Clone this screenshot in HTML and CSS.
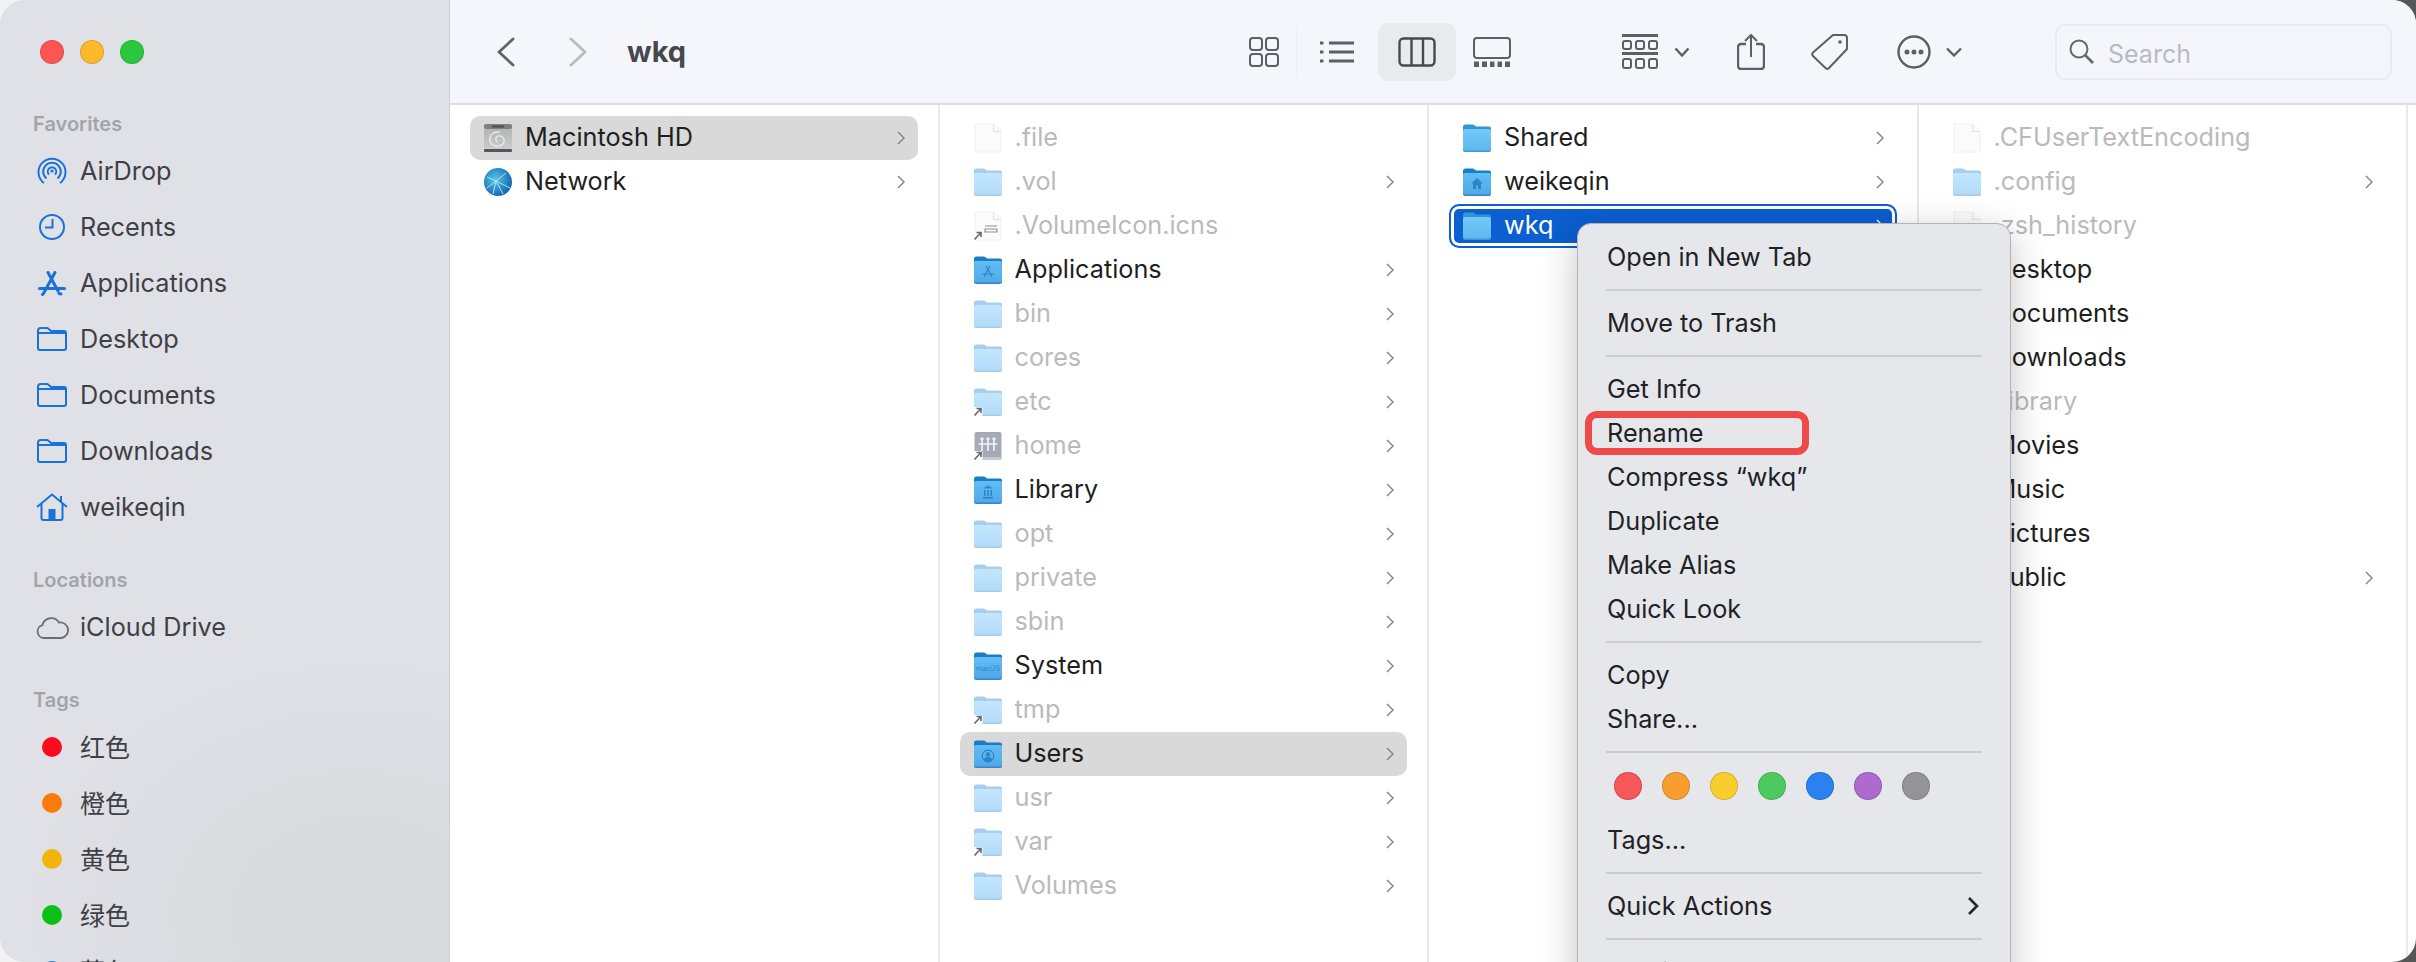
FILE: index.html
```html
<!DOCTYPE html>
<html>

<head>
    <meta charset="utf-8">
    <title>wkq</title>
    <link rel="stylesheet" href="styles.css">
</head>

<body>
    <svg class="defs" xmlns="http://www.w3.org/2000/svg">
        <defs>
            <linearGradient id="g-bright" x1="0" y1="0" x2="0" y2="1">
                <stop offset="0" stop-color="#62bdf4" />
                <stop offset="1" stop-color="#4fa9e8" />
            </linearGradient>
            <linearGradient id="g-dim" x1="0" y1="0" x2="0" y2="1">
                <stop offset="0" stop-color="#c3e6fd" />
                <stop offset="1" stop-color="#b2dbf9" />
            </linearGradient>
            <linearGradient id="g-plain" x1="0" y1="0" x2="0" y2="1">
                <stop offset="0" stop-color="#74c9f8" />
                <stop offset="1" stop-color="#5db8f1" />
            </linearGradient>
            <linearGradient id="g-drive" x1="0" y1="0" x2="0" y2="1">
                <stop offset="0" stop-color="#aeb0b0" />
                <stop offset="1" stop-color="#cfd1d1" />
            </linearGradient>
            <radialGradient id="g-globe" cx="0.4" cy="0.4" r="0.7">
                <stop offset="0" stop-color="#58c4e8" />
                <stop offset="1" stop-color="#0c5da6" />
            </radialGradient>
        </defs>
        <symbol id="folder-bright" viewBox="0 0 30 30">
            <path fill="#1b7ec2" d="M1 4a2.500 2.500 0 0 1 2.500-2.500h7a3 3 0 0 1 2 .8L14 3.500h13a2 2 0 0 1 2 2V12H1z" />
            <rect x="1" y="6" width="28" height="23" rx="2" fill="#3a86c4" />
            <rect x="1" y="6" width="28" height="21.500" rx="2" fill="url(#g-bright)" />
        </symbol>
        <symbol id="folder-plain" viewBox="0 0 30 30">
            <path fill="#2f96d9" d="M1 4a2.500 2.500 0 0 1 2.500-2.500h7a3 3 0 0 1 2 .8L14 3.500h13a2 2 0 0 1 2 2V12H1z" />
            <rect x="1" y="6" width="28" height="23" rx="2" fill="#4794cf" />
            <rect x="1" y="6" width="28" height="21.500" rx="2" fill="url(#g-plain)" />
        </symbol>
        <symbol id="folder-dim" viewBox="0 0 30 30">
            <path fill="#a6cfee" d="M1 4a2.500 2.500 0 0 1 2.500-2.500h7a3 3 0 0 1 2 .8L14 3.500h13a2 2 0 0 1 2 2V12H1z" />
            <rect x="1" y="6" width="28" height="23" rx="2" fill="#a3cbe8" />
            <rect x="1" y="6" width="28" height="21.500" rx="2" fill="url(#g-dim)" />
        </symbol>
        <symbol id="file" viewBox="0 0 30 30">
            <path fill="#fbfbfb" stroke="#f0f0f0" d="M2 1h19l7 7v21H2z" />
            <path fill="none" stroke="#e2e2e2" d="M20.500 1.500v7h7" />
        </symbol>
        <symbol id="alias" viewBox="0 0 30 30">
            <rect x="0" y="20" width="9.500" height="9.500" rx="1.500" fill="#fff" />
            <path fill="none" stroke="#666" stroke-width="1.600" d="M1.500 28.500l6-6.500M3.500 21.500h4.500v4.500" />
        </symbol>
        <symbol id="chev" viewBox="0 0 8 14">
            <path fill="none" stroke="#808082" stroke-width="1.400" d="M1 1l6 6-6 6" />
        </symbol>
        <symbol id="folder-line" viewBox="0 0 30 24">
            <path fill="none" stroke="#1a72d8" stroke-width="2" d="M1 6V3.500A2.500 2.500 0 0 1 3.500 1h6a3 3 0 0 1 2 .8L14 4h13a2 2 0 0 1 2 2v15a2 2 0 0 1-2 2H3a2 2 0 0 1-2-2V6h28" />
        </symbol>
    </svg>

    <div class="window">
        <aside class="sidebar">
            <div class="lights">
                <span class="light red"></span>
                <span class="light yellow"></span>
                <span class="light green"></span>
            </div>
            <div class="side-label first">Favorites</div>
            <div class="side-row">
                <span class="side-icon">
                    <svg width="30" height="28" viewBox="0 0 30 28" fill="none" stroke="#1a72d8" stroke-width="2">
                        <path d="M7 26A13.500 13.500 0 1 1 23 26" />
                        <path d="M9.500 21.500A8.800 8.800 0 1 1 20.500 21.500" />
                        <path d="M12 17.500a4.200 4.200 0 1 1 6 0" />
                        <circle cx="15" cy="14" r="1.600" fill="#1a72d8" stroke="none" />
                    </svg>
                </span>
                AirDrop
            </div>
            <div class="side-row">
                <span class="side-icon">
                    <svg width="28" height="28" viewBox="0 0 28 28" fill="none" stroke="#1a72d8" stroke-width="2">
                        <circle cx="14" cy="14" r="12" />
                        <path d="M14.500 6v8.500H7" />
                    </svg>
                </span>
                Recents
            </div>
            <div class="side-row">
                <span class="side-icon">
                    <svg width="28" height="25" viewBox="0 0 28 25" fill="none" stroke="#1a72d8" stroke-width="3" stroke-linecap="round">
                        <path d="M10 1.500L20 20M17 1.500L6 21.500" />
                        <path d="M1.500 17.500H26.500" />
                        <path d="M21 22.500l2 .5M4.500 23.500l1-1" />
                    </svg>
                </span>
                Applications
            </div>
            <div class="side-row">
                <span class="side-icon"><svg width="30" height="24"><use href="#folder-line" /></svg></span>
                Desktop
            </div>
            <div class="side-row">
                <span class="side-icon"><svg width="30" height="24"><use href="#folder-line" /></svg></span>
                Documents
            </div>
            <div class="side-row">
                <span class="side-icon"><svg width="30" height="24"><use href="#folder-line" /></svg></span>
                Downloads
            </div>
            <div class="side-row">
                <span class="side-icon">
                    <svg width="32" height="28" viewBox="0 0 32 28" fill="none" stroke="#1a72d8" stroke-width="2">
                        <path d="M1 14L16 1.500 31 14M25 9V3M5.500 11v14a2 2 0 0 0 2 2h17a2 2 0 0 0 2-2V11" />
                        <rect x="12.500" y="16" width="7" height="11" fill="#1a72d8" stroke="none" />
                    </svg>
                </span>
                weikeqin
            </div>
            <div class="side-label">Locations</div>
            <div class="side-row">
                <span class="side-icon">
                    <svg width="33" height="23" viewBox="0 0 33 23" fill="none" stroke="#6d6e72" stroke-width="1.800">
                        <path d="M8 22a6.500 6.500 0 0 1-1.500-12.800A9 9 0 0 1 23 6.500a7.800 7.800 0 0 1 2.500 15.500z" />
                    </svg>
                </span>
                iCloud Drive
            </div>
            <div class="side-label">Tags</div>
            <div class="side-row"><span class="side-icon"><span class="tag-dot t-red"></span></span><span class="tag-name">红色</span></div>
            <div class="side-row"><span class="side-icon"><span class="tag-dot t-orange"></span></span><span class="tag-name">橙色</span></div>
            <div class="side-row"><span class="side-icon"><span class="tag-dot t-yellow"></span></span><span class="tag-name">黄色</span></div>
            <div class="side-row"><span class="side-icon"><span class="tag-dot t-green"></span></span><span class="tag-name">绿色</span></div>
            <div class="side-row"><span class="side-icon"><span class="tag-dot t-blue"></span></span><span class="tag-name">蓝色</span></div>
        </aside>

        <main class="main">
            <header class="toolbar">
                <svg class="nav-back" width="18" height="30" viewBox="0 0 18 30" fill="none" stroke="#636367" stroke-width="2.800" stroke-linecap="round"><path d="M16 2L2 15l14 13" /></svg>
                <svg class="nav-forward" width="18" height="30" viewBox="0 0 18 30" fill="none" stroke="#b9babd" stroke-width="2.800" stroke-linecap="round"><path d="M2 2l14 13L2 28" /></svg>
                <div class="title">wkq</div>

                <svg width="32" height="30" viewBox="0 0 32 30" fill="none" stroke="#5f5f63" stroke-width="2">
                    <rect x="2" y="1" width="12" height="12" rx="3" />
                    <rect x="18" y="1" width="12" height="12" rx="3" />
                    <rect x="2" y="17" width="12" height="12" rx="3" />
                    <rect x="18" y="17" width="12" height="12" rx="3" />
                </svg>
                <span class="tb-sep"></span>
                <svg class="tb-list" width="34" height="24" viewBox="0 0 34 24" fill="none" stroke="#5f5f63" stroke-width="3">
                    <path d="M0 3h3.500M0 12h3.500M0 21h3.500M9 3h25M9 12h25M9 21h25" />
                </svg>
                <span class="tb-active">
                    <svg width="38" height="30" viewBox="0 0 38 30" fill="none" stroke="#49494d" stroke-width="2.400">
                        <rect x="1.500" y="1.500" width="35" height="27" rx="4" />
                        <path d="M13.500 1.500v27M25 1.500v27" />
                    </svg>
                </span>
                <svg class="tb-gallery" width="38" height="30" viewBox="0 0 38 30" fill="#5f5f63">
                    <rect x="1" y="1" width="36" height="20" rx="3" fill="none" stroke="#5f5f63" stroke-width="2" />
                    <path d="M1 24.500h5V30H1zM9 24.500h5V30H9zM17 24.500h4.500V30H17zM24.500 24.500h4.500V30h-4.500zM32 24.500h5V30h-5z" />
                </svg>

                <svg class="tb-group" width="36" height="35" viewBox="0 0 36 35" fill="none" stroke="#5f5f63" stroke-width="2">
                    <path stroke-width="3" d="M0 1.500h36M0 19.500h36" />
                    <rect x="1" y="7" width="8" height="8" rx="2" />
                    <rect x="14" y="7" width="8" height="8" rx="2" />
                    <rect x="27" y="7" width="8" height="8" rx="2" />
                    <rect x="1" y="25" width="8" height="9" rx="2" />
                    <rect x="14" y="25" width="8" height="9" rx="2" />
                    <rect x="27" y="25" width="8" height="9" rx="2" />
                </svg>
                <svg class="tb-drop" width="16" height="10" viewBox="0 0 16 10" fill="none" stroke="#5f5f63" stroke-width="2.400"><path d="M1.500 1.500L8 8.500l6.500-7" /></svg>
                <svg class="tb-share" width="28" height="37" viewBox="0 0 28 37" fill="none" stroke="#5f5f63" stroke-width="2">
                    <path stroke-width="2.400" d="M9 11H4a3 3 0 0 0-3 3v19a3 3 0 0 0 3 3h20a3 3 0 0 0 3-3V14a3 3 0 0 0-3-3h-5" />
                    <path d="M14 24V2M8 8l6-6 6 6" />
                </svg>
                <svg class="tb-tag" width="38" height="38" viewBox="0 0 38 38" fill="none" stroke="#5f5f63" stroke-width="2">
                    <path d="M22 2h11a3 3 0 0 1 3 3v11L18 35a2.500 2.500 0 0 1-3.500 0L2 23a2.500 2.500 0 0 1 0-3.500z" />
                    <circle cx="29" cy="9" r="1.800" fill="#5f5f63" stroke="none" />
                </svg>
                <svg class="tb-more" width="34" height="34" viewBox="0 0 34 34" fill="none" stroke="#5f5f63" stroke-width="2.400">
                    <circle cx="17" cy="17" r="15.500" />
                    <circle cx="10" cy="17" r="1.300" fill="#5f5f63" />
                    <circle cx="17" cy="17" r="1.300" fill="#5f5f63" />
                    <circle cx="24" cy="17" r="1.300" fill="#5f5f63" />
                </svg>
                <svg class="tb-drop-more" width="18" height="10" viewBox="0 0 18 10" fill="none" stroke="#5f5f63" stroke-width="2.400"><path d="M2 1.500l7 7 7-7" /></svg>

                <div class="search">
                    <svg width="25" height="25" viewBox="0 0 25 25" fill="none" stroke="#68686c" stroke-width="2">
                        <circle cx="10" cy="10" r="8.500" />
                        <path stroke-width="2.600" d="M16 16l8 8" />
                    </svg>
                    <span class="search-text">Search</span>
                </div>
            </header>

            <div class="columns">
                <div class="col">
                    <div class="row selected">
                        <svg class="icon" viewBox="0 0 30 30">
                            <rect x="1" y="1" width="28" height="28" rx="3" fill="url(#g-drive)" />
                            <rect x="1" y="1" width="28" height="5" rx="2" fill="#7d7f80" />
                            <rect x="9" y="2.500" width="12" height="2" fill="#4c4d4e" />
                            <path fill="none" stroke="#eef0f0" stroke-width="1.200" d="M17 9c-6-1-11 3-10 9 1 5 9 7 13 3 3-4 0-9-5-8-3 1-3 5 0 6" />
                            <rect x="1" y="26" width="28" height="3" rx="1" fill="#55575a" />
                        </svg>
                        <span class="name">Macintosh HD</span>
                        <svg class="chev"><use href="#chev" /></svg>
                    </div>
                    <div class="row">
                        <svg class="icon" viewBox="0 0 30 30">
                            <circle cx="15" cy="15" r="14" fill="url(#g-globe)" />
                            <path fill="none" stroke="#b8ecf7" stroke-width="0.900" d="M4 10l9 4 10-8M13 14l-3 13M13 14l14 7M13 14l7 13M4 21l9-7" />
                        </svg>
                        <span class="name">Network</span>
                        <svg class="chev"><use href="#chev" /></svg>
                    </div>
                </div>

                <div class="col">
                    <div class="row"><svg class="icon"><use href="#file" /></svg><span class="name dim">.file</span></div>
                    <div class="row"><svg class="icon"><use href="#folder-dim" /></svg><span class="name dim">.vol</span><svg class="chev"><use href="#chev" /></svg></div>
                    <div class="row">
                        <svg class="icon" viewBox="0 0 30 30">
                            <use href="#file" width="30" height="30" />
                            <path fill="none" stroke="#8d8f99" stroke-width="1.200" d="M12 15h12M12 18h12v3H12z" />
                            <use href="#alias" width="30" height="30" />
                        </svg>
                        <span class="name dim">.VolumeIcon.icns</span>
                    </div>
                    <div class="row">
                        <svg class="icon" viewBox="0 0 30 30">
                            <use href="#folder-bright" width="30" height="30" />
                            <path fill="none" stroke="#2f83c9" stroke-width="1.200" d="M13 11l6 11M17 11l-6 11M9 19h12" />
                        </svg>
                        <span class="name">Applications</span>
                        <svg class="chev"><use href="#chev" /></svg>
                    </div>
                    <div class="row"><svg class="icon"><use href="#folder-dim" /></svg><span class="name dim">bin</span><svg class="chev"><use href="#chev" /></svg></div>
                    <div class="row"><svg class="icon"><use href="#folder-dim" /></svg><span class="name dim">cores</span><svg class="chev"><use href="#chev" /></svg></div>
                    <div class="row">
                        <svg class="icon" viewBox="0 0 30 30">
                            <use href="#folder-dim" width="30" height="30" />
                            <use href="#alias" width="30" height="30" />
                        </svg>
                        <span class="name dim">etc</span>
                        <svg class="chev"><use href="#chev" /></svg>
                    </div>
                    <div class="row">
                        <svg class="icon" viewBox="0 0 30 30">
                            <rect x="1.500" y="1" width="27" height="28" rx="2" fill="#a6a9b6" />
                            <rect x="1.500" y="26" width="27" height="3" rx="1" fill="#c7c8cf" />
                            <path fill="none" stroke="#f2f3f7" stroke-width="1.600" d="M9 9v11M5.500 13h7M15 9v11M11.500 13h7M21 9v11M17.500 13h7" />
                            <circle cx="9" cy="8" r="1.700" fill="#f2f3f7" />
                            <circle cx="15" cy="8" r="1.700" fill="#f2f3f7" />
                            <circle cx="21" cy="8" r="1.700" fill="#f2f3f7" />
                            <use href="#alias" width="30" height="30" />
                        </svg>
                        <span class="name dim">home</span>
                        <svg class="chev"><use href="#chev" /></svg>
                    </div>
                    <div class="row">
                        <svg class="icon" viewBox="0 0 30 30">
                            <use href="#folder-bright" width="30" height="30" />
                            <path fill="#2f83c9" d="M10 13.500l5-3 5 3zM10 22h10v1.500H10zM11 15h1.500v6H11zM14.200 15h1.500v6h-1.500zM17.500 15H19v6h-1.500z" />
                        </svg>
                        <span class="name">Library</span>
                        <svg class="chev"><use href="#chev" /></svg>
                    </div>
                    <div class="row"><svg class="icon"><use href="#folder-dim" /></svg><span class="name dim">opt</span><svg class="chev"><use href="#chev" /></svg></div>
                    <div class="row"><svg class="icon"><use href="#folder-dim" /></svg><span class="name dim">private</span><svg class="chev"><use href="#chev" /></svg></div>
                    <div class="row"><svg class="icon"><use href="#folder-dim" /></svg><span class="name dim">sbin</span><svg class="chev"><use href="#chev" /></svg></div>
                    <div class="row">
                        <svg class="icon" viewBox="0 0 30 30">
                            <use href="#folder-bright" width="30" height="30" />
                            <text class="macos-text" x="15" y="19.500" text-anchor="middle">macOS</text>
                        </svg>
                        <span class="name">System</span>
                        <svg class="chev"><use href="#chev" /></svg>
                    </div>
                    <div class="row">
                        <svg class="icon" viewBox="0 0 30 30">
                            <use href="#folder-dim" width="30" height="30" />
                            <use href="#alias" width="30" height="30" />
                        </svg>
                        <span class="name dim">tmp</span>
                        <svg class="chev"><use href="#chev" /></svg>
                    </div>
                    <div class="row selected">
                        <svg class="icon" viewBox="0 0 30 30">
                            <use href="#folder-bright" width="30" height="30" />
                            <circle cx="15" cy="17" r="5.800" fill="none" stroke="#2f83c9" stroke-width="1.200" />
                            <circle cx="15" cy="15.500" r="2.200" fill="#2f83c9" />
                            <path fill="#2f83c9" d="M11 21a4 3 0 0 1 8 0l-2 1.500h-4z" />
                        </svg>
                        <span class="name">Users</span>
                        <svg class="chev"><use href="#chev" /></svg>
                    </div>
                    <div class="row"><svg class="icon"><use href="#folder-dim" /></svg><span class="name dim">usr</span><svg class="chev"><use href="#chev" /></svg></div>
                    <div class="row">
                        <svg class="icon" viewBox="0 0 30 30">
                            <use href="#folder-dim" width="30" height="30" />
                            <use href="#alias" width="30" height="30" />
                        </svg>
                        <span class="name dim">var</span>
                        <svg class="chev"><use href="#chev" /></svg>
                    </div>
                    <div class="row"><svg class="icon"><use href="#folder-dim" /></svg><span class="name dim">Volumes</span><svg class="chev"><use href="#chev" /></svg></div>
                </div>

                <div class="col">
                    <div class="row"><svg class="icon"><use href="#folder-plain" /></svg><span class="name">Shared</span><svg class="chev"><use href="#chev" /></svg></div>
                    <div class="row">
                        <svg class="icon" viewBox="0 0 30 30">
                            <use href="#folder-bright" width="30" height="30" />
                            <path fill="#2f83c9" d="M15 11l-6 5.500h2v5.500h3v-3.500h2v3.500h3v-5.500h2z" />
                        </svg>
                        <span class="name">weikeqin</span>
                        <svg class="chev"><use href="#chev" /></svg>
                    </div>
                    <div class="row focused">
                        <svg class="icon"><use href="#folder-plain" /></svg>
                        <span class="name">wkq</span>
                        <svg class="chev" viewBox="0 0 8 14" fill="none" stroke="#fff" stroke-width="1.400"><path d="M1 1l6 6-6 6" /></svg>
                    </div>
                </div>

                <div class="col">
                    <div class="row"><svg class="icon"><use href="#file" /></svg><span class="name dim">.CFUserTextEncoding</span></div>
                    <div class="row"><svg class="icon"><use href="#folder-dim" /></svg><span class="name dim">.config</span><svg class="chev"><use href="#chev" /></svg></div>
                    <div class="row"><svg class="icon"><use href="#file" /></svg><span class="name dim">.zsh_history</span></div>
                    <div class="row"><span class="icon"></span><span class="name">Desktop</span></div>
                    <div class="row"><span class="icon"></span><span class="name">Documents</span></div>
                    <div class="row"><span class="icon"></span><span class="name">Downloads</span></div>
                    <div class="row"><span class="icon"></span><span class="name dim">Library</span></div>
                    <div class="row"><span class="icon"></span><span class="name">Movies</span></div>
                    <div class="row"><span class="icon"></span><span class="name">Music</span></div>
                    <div class="row"><span class="icon"></span><span class="name">Pictures</span></div>
                    <div class="row"><span class="icon"></span><span class="name">Public</span><svg class="chev"><use href="#chev" /></svg></div>
                </div>
            </div>
        </main>

        <div class="menu">
            <div class="menu-item">Open in New Tab</div>
            <div class="menu-sep"></div>
            <div class="menu-item">Move to Trash</div>
            <div class="menu-sep"></div>
            <div class="menu-item">Get Info</div>
            <div class="menu-item">Rename</div>
            <div class="menu-item">Compress “wkq”</div>
            <div class="menu-item">Duplicate</div>
            <div class="menu-item">Make Alias</div>
            <div class="menu-item">Quick Look</div>
            <div class="menu-sep"></div>
            <div class="menu-item">Copy</div>
            <div class="menu-item">Share...</div>
            <div class="menu-sep"></div>
            <div class="menu-colors">
                <span class="color c-red"></span>
                <span class="color c-orange"></span>
                <span class="color c-yellow"></span>
                <span class="color c-green"></span>
                <span class="color c-blue"></span>
                <span class="color c-purple"></span>
                <span class="color c-gray"></span>
            </div>
            <div class="menu-item">Tags...</div>
            <div class="menu-sep"></div>
            <div class="menu-item">Quick Actions
                <svg width="12" height="20" viewBox="0 0 12 20" fill="none" stroke="#26272a" stroke-width="2.600"><path d="M2 2l8 8-8 8" /></svg>
            </div>
            <div class="menu-sep"></div>
            <div class="menu-item">Services</div>
            <div class="highlight"></div>
        </div>
    </div>
</body>

</html>
```

FILE: styles.css
```css
html,
body {
    margin: 0;
    height: 962px;
    overflow: hidden;
}

body {
    background: linear-gradient(to right, #f2f2f2 50%, #565656 50%);
    font-family: Inter, "Noto Sans", "Liberation Sans", sans-serif;
    font-size: 25.25px;
}

.defs {
    display: block;
    width: 0;
    height: 0;
}

.window {
    position: relative;
    display: flex;
    width: 2416px;
    height: 962px;
    background: #fff;
    border-radius: 24px;
    overflow: hidden;
}

/* sidebar */
.sidebar {
    width: 450px;
    flex-shrink: 0;
    box-sizing: border-box;
    border-right: 1px solid #cfd0d4;
    background: radial-gradient(ellipse 340px 260px at 80% 95%, #d9dade 35%, #e0e1e6 100%);
    color: #3f4045;
}

.lights {
    display: flex;
    gap: 16px;
    height: 40px;
    padding: 40px 0 0 40px;
}

.light {
    width: 24px;
    height: 24px;
    box-sizing: border-box;
    border-radius: 50%;
    border: 1px solid rgba(0, 0, 0, 0.12);
}

.red {
    background: #fd5652;
}

.yellow {
    background: #fdb82c;
}

.green {
    background: #2ac73f;
}

.side-label {
    display: flex;
    align-items: flex-end;
    box-sizing: border-box;
    height: 64px;
    padding: 0 0 7px 33px;
    color: #a3a4a9;
    font-size: 20px;
    font-weight: 600;
    line-height: 24px;
}

.side-label.first {
    height: 63px;
}

.side-row {
    display: flex;
    align-items: center;
    height: 56px;
}

.tag-name {
    padding-bottom: 3px;
    font-family: "Noto Sans CJK SC", sans-serif;
    font-size: 25px;
}

.side-icon {
    display: flex;
    align-items: center;
    justify-content: center;
    width: 40px;
    margin: 0 8px 0 32px;
}

.tag-dot {
    width: 20px;
    height: 20px;
    border-radius: 50%;
}

.t-red {
    background: #fe0a1f;
}

.t-orange {
    background: #fb7a0c;
}

.t-yellow {
    background: #f1b50a;
}

.t-green {
    background: #0cbf16;
}

.t-blue {
    background: #1a84ef;
}

/* toolbar */
.main {
    flex: 1;
    display: flex;
    flex-direction: column;
    min-width: 0;
}

.toolbar {
    display: flex;
    align-items: center;
    flex-shrink: 0;
    box-sizing: border-box;
    height: 105px;
    padding: 0 24px 0 47px;
    background: #f5f6fb;
    border-bottom: 2px solid #dddee2;
}

.toolbar svg {
    flex-shrink: 0;
}

.nav-forward {
    margin-left: 54px;
}

.title {
    flex: 1;
    margin-left: 40px;
    color: #47484c;
    font-size: 29px;
    font-weight: 700;
}

.tb-sep {
    width: 1px;
    height: 50px;
    margin: 0 23px 0 16px;
    background: #ecedf1;
}

.tb-active {
    display: flex;
    align-items: center;
    justify-content: center;
    width: 78px;
    height: 58px;
    margin-left: 24px;
    border-radius: 10px;
    background: #e9eaee;
}

.tb-gallery {
    margin-left: 17px;
}

.tb-group {
    margin-left: 111px;
}

.tb-drop {
    margin-left: 16px;
}

.tb-share {
    margin-left: 47px;
}

.tb-tag {
    margin-left: 46px;
}

.tb-more {
    margin-left: 48px;
}

.tb-drop-more {
    margin-left: 14px;
}

.search {
    display: flex;
    align-items: center;
    gap: 14px;
    box-sizing: border-box;
    width: 337px;
    height: 56px;
    margin-left: 92px;
    padding-left: 12px;
    border: 2px solid #eaebef;
    border-radius: 10px;
    color: #b9bac0;
}

.search-text {
    padding-top: 5px;
    font-size: 25px;
}

/* columns */
.columns {
    flex: 1;
    display: flex;
    padding-right: 8px;
    min-height: 0;
}

.col {
    flex: 1;
    min-width: 0;
    box-sizing: border-box;
    padding-top: 11px;
    border-right: 2px solid #e8e8e8;
}

.row {
    display: flex;
    align-items: center;
    gap: 12px;
    box-sizing: border-box;
    height: 44px;
    margin: 0 20px;
    padding: 0 13px;
    border-radius: 10px;
    color: #1f1f21;
}

.row.selected {
    background: #d9d9d9;
}

.row.focused {
    padding: 0 11px;
    border: 2px solid #0b5fd0;
    background: #0b5fd0;
    box-shadow: inset 0 0 0 3px #fff;
    color: #fff;
}

.icon {
    width: 30px;
    height: 30px;
    flex-shrink: 0;
}

.name {
    flex: 1;
    padding-bottom: 2px;
    white-space: nowrap;
}

.dim {
    color: #bababc;
}

.chev {
    width: 8px;
    height: 14px;
    flex-shrink: 0;
}

.macos-text {
    fill: #2f83c9;
    font-size: 7px;
}

/* context menu */
.menu {
    position: absolute;
    left: 1577px;
    top: 223px;
    box-sizing: border-box;
    width: 434px;
    height: 800px;
    padding: 11px 0;
    border: 1px solid #b3b4b7;
    border-radius: 14px;
    background: #e6e7eb;
    box-shadow: 0 10px 36px rgba(0, 0, 0, 0.24);
    color: #212225;
}

.menu-item {
    display: flex;
    align-items: center;
    justify-content: space-between;
    height: 44px;
    padding: 0 31px 0 29px;
}

.menu-sep {
    height: 2px;
    margin: 10px 28px;
    background: #cbccd0;
}

.menu-colors {
    display: flex;
    gap: 20px;
    height: 55px;
    padding: 9px 0 0 36px;
    box-sizing: border-box;
}

.color {
    width: 28px;
    height: 28px;
    box-sizing: border-box;
    border-radius: 50%;
    border: 1px solid rgba(0, 0, 0, 0.14);
}

.c-red {
    background: #f5575a;
}

.c-orange {
    background: #f89d30;
}

.c-yellow {
    background: #f8ce2e;
}

.c-green {
    background: #4dca60;
}

.c-blue {
    background: #2a82f0;
}

.c-purple {
    background: #ad6bd0;
}

.c-gray {
    background: #949497;
}

.highlight {
    position: absolute;
    left: 7px;
    top: 187px;
    box-sizing: border-box;
    width: 224px;
    height: 44px;
    border: 7px solid #ef4a4a;
    border-radius: 12px;
}
```
